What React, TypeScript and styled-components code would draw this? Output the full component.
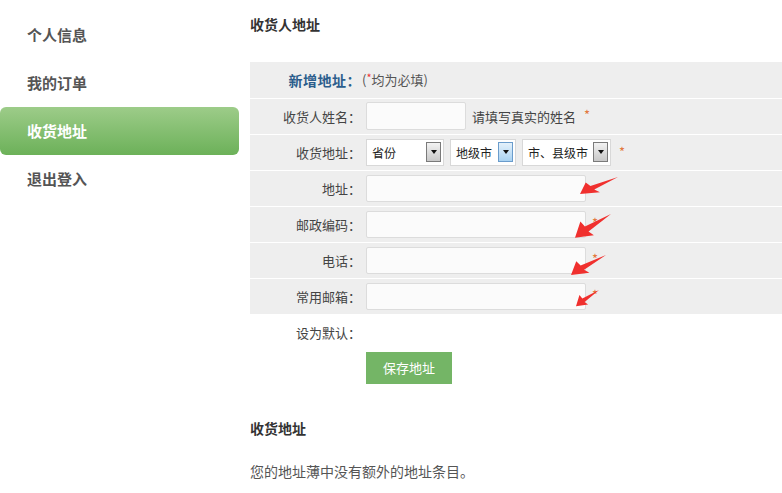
import React from "react";
import styled, { createGlobalStyle } from "styled-components";

const GlobalStyle = createGlobalStyle`
  body {
    margin: 0;
    background: #fff;
    font-family: "Noto Sans CJK SC", "Liberation Sans", sans-serif;
    color: #333;
  }
`;

const Page = styled.div`
  display: flex;
  width: 782px;
  overflow: hidden;
`;

const Sidebar = styled.ul`
  list-style: none;
  margin: 0;
  padding: 11px 0 0;
  width: 239px;
  flex-shrink: 0;
`;

const NavItem = styled.li<{ $active?: boolean }>`
  height: 48px;
  line-height: 48px;
  padding-left: 27px;
  font-size: 15px;
  font-weight: 700;
  border-radius: 6px;
  color: ${({ $active }) => ($active ? "#fff" : "#555")};
  background: ${({ $active }) =>
    $active ? "linear-gradient(#9dcc89, #6cb159)" : "transparent"};
`;

const Main = styled.div`
  flex: 1;
  margin-left: 11px;
`;

const Heading = styled.h3<{ $top?: number }>`
  margin: 0;
  font-size: 14px;
  font-weight: 700;
  color: #333;
  line-height: 20px;
  padding-top: ${({ $top }) => $top ?? 14}px;
`;

const FormTable = styled.table`
  margin-top: 28px;
  width: 540px;
  border-collapse: collapse;
  font-size: 13px;
  color: #444;
`;

const Row = styled.tr<{ $plain?: boolean }>`
  height: 36px;
  background: ${({ $plain }) => ($plain ? "#fff" : "#eeeeee")};
  border-bottom: 1px solid #fff;
`;

const LabelCell = styled.td`
  width: 111px;
  padding: 0;
  text-align: right;
  white-space: nowrap;
`;

const FieldCell = styled.td<{ $tight?: boolean }>`
  position: relative;
  padding: 0 0 0 ${({ $tight }) => ($tight ? 1 : 5)}px;
  white-space: nowrap;
`;

const NewTitle = styled.span`
  color: #2b5d8c;
  font-weight: 700;
  font-size: 14px;
  letter-spacing: 0.5px;
`;

const Hint = styled.span`
  color: #555;
`;

const RedStar = styled.span`
  color: #e33;
  font-size: 11px;
  position: relative;
  top: -3px;
`;

const TextInput = styled.input<{ $w: number; $h?: number }>`
  box-sizing: border-box;
  width: ${({ $w }) => $w}px;
  height: ${({ $h }) => $h ?? 28}px;
  border: 1px solid #dcdcdc;
  border-radius: 2px;
  background: #fbfbfb;
  vertical-align: middle;
  outline: none;
`;

const Note = styled.span`
  margin-left: 6px;
  color: #444;
  vertical-align: middle;
`;

const Star = styled.span<{ $gap?: number; $lift?: number }>`
  color: #e2773d;
  font-size: 13px;
  margin-left: ${({ $gap }) => $gap ?? 6}px;
  vertical-align: ${({ $lift }) => $lift ?? 0}px;
`;

const SelectBox = styled.div<{ $w: number }>`
  display: inline-flex;
  align-items: center;
  justify-content: space-between;
  box-sizing: border-box;
  width: ${({ $w }) => $w}px;
  height: 27px;
  margin-right: 6px;
  padding: 0 2px 0 5px;
  border: 1px solid #d8d8d8;
  background: #fff;
  color: #222;
  font-size: 12px;
  vertical-align: middle;
`;

const DropButton = styled.span<{ $hover?: boolean }>`
  display: inline-flex;
  align-items: center;
  justify-content: center;
  flex-shrink: 0;
  width: 15px;
  height: 20px;
  box-sizing: border-box;
  border: 1px solid ${({ $hover }) => ($hover ? "#6a9ccc" : "#7a7a7a")};
  background: ${({ $hover }) =>
    $hover ? "linear-gradient(#e4f1fb, #a9d2f1)" : "linear-gradient(#f2f2f2, #c8c8c8)"};

  &::after {
    content: "";
    border-left: 3px solid transparent;
    border-right: 3px solid transparent;
    border-top: 4px solid #111;
  }
`;

const ArrowMark = styled.svg<{ $x: number; $y: number }>`
  position: absolute;
  left: ${({ $x }) => $x}px;
  top: ${({ $y }) => $y}px;
  pointer-events: none;
`;

const SaveButton = styled.button`
  margin: 1px 0 0 116px;
  width: 86px;
  height: 32px;
  border: none;
  background: #74b566;
  color: #fff;
  font-family: inherit;
  font-size: 13px;
`;

const Empty = styled.p`
  margin: 23px 0 0;
  font-size: 14px;
  color: #555;
`;

const Arrow = ({ x, y, w, h }: { x: number; y: number; w: number; h: number }) => (
  <ArrowMark $x={x} $y={y} width={w} height={h} viewBox="0 0 40 20" preserveAspectRatio="none">
    <polygon points="0,19 6,6 11,10 40,0 15,14 21,17" fill="#f0302e" />
  </ArrowMark>
);

const Select = ({ w, label, hover }: { w: number; label: string; hover?: boolean }) => (
  <SelectBox $w={w}>
    <span>{label}</span>
    <DropButton $hover={hover} />
  </SelectBox>
);

export default function App() {
  return (
    <Page>
      <GlobalStyle />
      <Sidebar>
        <NavItem>个人信息</NavItem>
        <NavItem>我的订单</NavItem>
        <NavItem $active>收货地址</NavItem>
        <NavItem>退出登入</NavItem>
      </Sidebar>
      <Main>
        <Heading>收货人地址</Heading>
        <FormTable>
          <tbody>
            <Row>
              <LabelCell>
                <NewTitle>新增地址：</NewTitle>
              </LabelCell>
              <FieldCell $tight>
                <Hint>
                  (<RedStar>*</RedStar>均为必填)
                </Hint>
              </FieldCell>
            </Row>
            <Row>
              <LabelCell>收货人姓名：</LabelCell>
              <FieldCell>
                <TextInput $w={100} />
                <Note>请填写真实的姓名</Note>
                <Star $gap={8}>*</Star>
              </FieldCell>
            </Row>
            <Row>
              <LabelCell>收货地址：</LabelCell>
              <FieldCell>
                <Select w={78} label="省份" />
                <Select w={66} label="地级市" hover />
                <Select w={89} label="市、县级市" />
                <Star $gap={2} $lift={-1}>*</Star>
              </FieldCell>
            </Row>
            <Row>
              <LabelCell>地址：</LabelCell>
              <FieldCell>
                <TextInput $w={220} $h={27} />
                <Arrow x={219} y={6} w={38} h={18} />
              </FieldCell>
            </Row>
            <Row>
              <LabelCell>邮政编码：</LabelCell>
              <FieldCell>
                <TextInput $w={220} $h={27} />
                <Star>*</Star>
                <Arrow x={214} y={7} w={36} h={25} />
              </FieldCell>
            </Row>
            <Row>
              <LabelCell>电话：</LabelCell>
              <FieldCell>
                <TextInput $w={220} $h={27} />
                <Star>*</Star>
                <Arrow x={210} y={12} w={35} h={21} />
              </FieldCell>
            </Row>
            <Row>
              <LabelCell>常用邮箱：</LabelCell>
              <FieldCell>
                <TextInput $w={220} $h={27} />
                <Star>*</Star>
                <Arrow x={215} y={11} w={23} h={17} />
              </FieldCell>
            </Row>
            <Row $plain>
              <LabelCell>设为默认：</LabelCell>
              <FieldCell />
            </Row>
          </tbody>
        </FormTable>
        <SaveButton>保存地址</SaveButton>
        <Heading $top={34}>收货地址</Heading>
        <Empty>您的地址薄中没有额外的地址条目。</Empty>
      </Main>
    </Page>
  );
}
